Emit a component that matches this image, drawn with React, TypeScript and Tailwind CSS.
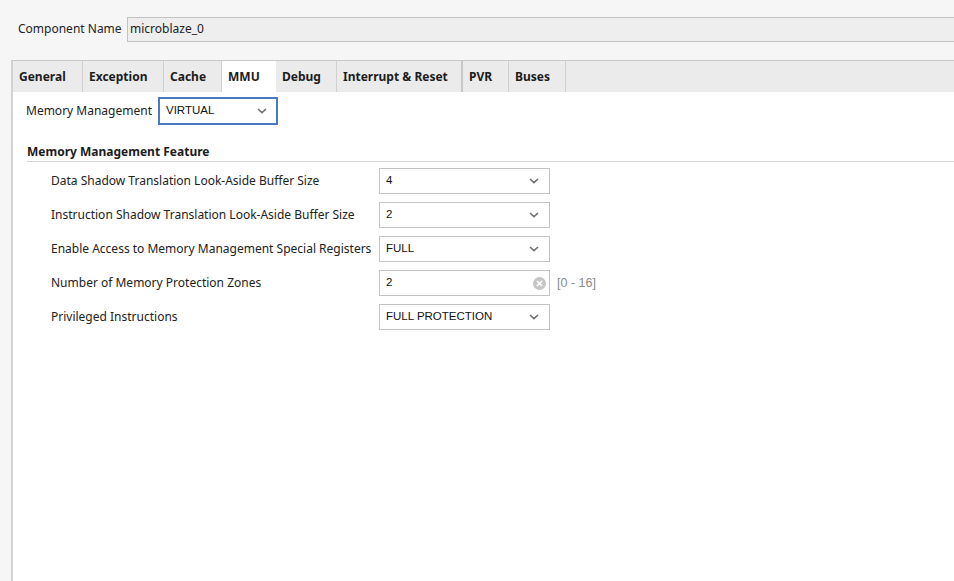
import React from "react";

const tabs = [
  { label: "General", w: "w-[70px]" },
  { label: "Exception", w: "w-[81px]" },
  { label: "Cache", w: "w-[58px]" },
  { label: "MMU", w: "w-[54px]" },
  { label: "Debug", w: "w-[61px]" },
  { label: "Interrupt & Reset", w: "w-[126px]" },
  { label: "PVR", w: "w-[46px]" },
  { label: "Buses", w: "w-[57px]" },
];

type Row = {
  label: string;
  value: string;
  kind: "select" | "number";
};

const rows: Row[] = [
  { label: "Data Shadow Translation Look-Aside Buffer Size", value: "4", kind: "select" },
  { label: "Instruction Shadow Translation Look-Aside Buffer Size", value: "2", kind: "select" },
  { label: "Enable Access to Memory Management Special Registers", value: "FULL", kind: "select" },
  { label: "Number of Memory Protection Zones", value: "2", kind: "number" },
  { label: "Privileged Instructions", value: "FULL PROTECTION", kind: "select" },
];

function Chevron() {
  return (
    <svg width="10" height="6" viewBox="0 0 10 6" className="shrink-0">
      <path d="M1 1 L5 4.6 L9 1" fill="none" stroke="#707070" strokeWidth="1.6" />
    </svg>
  );
}

function ClearIcon() {
  return (
    <svg width="13" height="13" viewBox="0 0 13 13" className="shrink-0">
      <circle cx="6.5" cy="6.5" r="6.5" fill="#c6c6c6" />
      <path d="M4 4 L9 9 M9 4 L4 9" stroke="#fff" strokeWidth="1.7" />
    </svg>
  );
}

function Field({ row }: { row: Row }) {
  const isNumber = row.kind === "number";
  return (
    <div className="flex h-[34px] items-center">
      <div className="w-[352px] whitespace-nowrap pl-[24px] text-[12px] text-[#222]">{row.label}</div>
      <div
        className={`flex h-[26px] w-[171px] items-center justify-between border border-[#c4c4c4] bg-white pl-[6px] font-['Liberation_Sans',Arial,sans-serif] text-[11.5px] text-[#111] ${
          isNumber ? "pr-[3px]" : "pr-[10px]"
        }`}
      >
        <span>{row.value}</span>
        {isNumber ? <ClearIcon /> : <Chevron />}
      </div>
      {isNumber && (
        <span className="ml-[7px] font-['Liberation_Sans',Arial,sans-serif] text-[12.5px] text-[#8a8a8a]">
          [0 - 16]
        </span>
      )}
    </div>
  );
}

export default function App() {
  return (
    <div className="flex h-[581px] w-[954px] flex-col overflow-hidden bg-[#f6f6f6] font-['Noto_Sans',sans-serif] text-[#222]">
      <div className="flex h-[60px] items-center pb-[2px] pl-[18px]">
        <span className="w-[109px] text-[12px]">Component Name</span>
        <div className="flex h-[25px] flex-1 items-center border border-r-0 border-[#c2c2c2] bg-[#eeeeee] pl-[2px] text-[12px]">
          microblaze_0
        </div>
      </div>

      <div className="ml-[11px] flex flex-1 flex-col border-l-2 border-t border-l-[#d2d2d2] border-t-[#c8c8c8] bg-white">
        <div className="flex h-[31px] bg-[#ebebeb]">
          {tabs.map((t) => {
            const active = t.label === "MMU";
            return (
              <div
                key={t.label}
                className={`flex ${t.w} items-center pl-[6px] text-[12px] font-bold text-[#1c1c1c] ${
                  active ? "bg-white" : "border-r border-[#d0d0d0]"
                } ${t.label === "Interrupt & Reset" ? "border-r-2 border-r-[#c8c8c8]" : ""}`}
              >
                <span className="mt-[1px]">{t.label}</span>
              </div>
            );
          })}
        </div>

        <div className="flex items-center pl-[13px] pt-[5px]">
          <span className="w-[132px] text-[12px]">Memory Management</span>
          <div className="flex h-[28px] w-[120px] items-center justify-between border-2 border-[#4a79c7] pl-[6px] pr-[9px] font-['Liberation_Sans',Arial,sans-serif] text-[11.5px] text-[#111]">
            <span>VIRTUAL</span>
            <Chevron />
          </div>
        </div>

        <div className="ml-[14px] mt-[18px] border-b border-[#d6d6d6] text-[12px] font-bold text-[#1c1c1c]">
          Memory Management Feature
        </div>

        <div className="ml-[14px] mt-[2px] flex flex-col">
          {rows.map((r) => (
            <Field key={r.label} row={r} />
          ))}
        </div>
      </div>
    </div>
  );
}
